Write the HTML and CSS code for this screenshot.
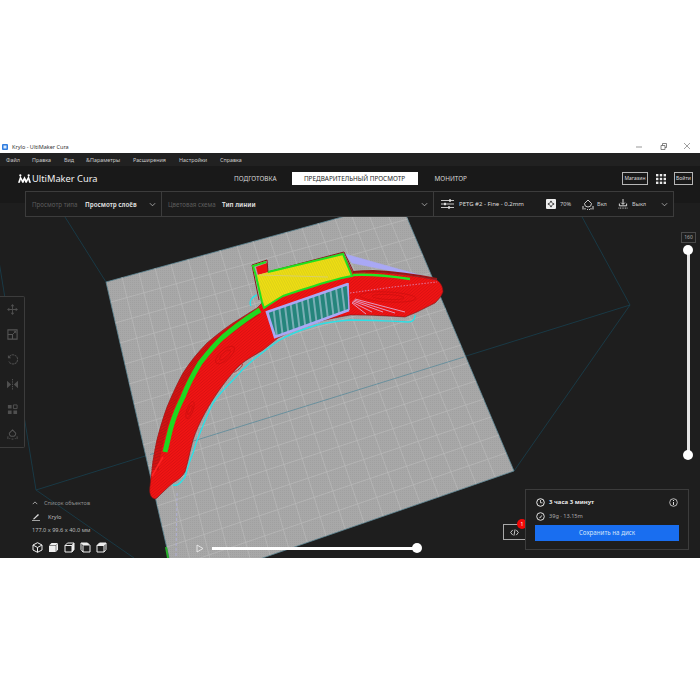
FILE: index.html
```html
<!DOCTYPE html>
<html>

<head>
    <meta charset="utf-8">
    <title>Krylo - UltiMaker Cura</title>
    <link rel="stylesheet" href="styles.css">
</head>

<body>
    <div class="window">
        <div class="title-bar">
            <svg class="app-icon" viewBox="0 0 6 6"><rect width="6" height="6" rx="1" fill="#2f7de0"/><rect x="1.500" y="1.500" width="3" height="3" fill="#d8e8fa"/></svg>
            <span class="title-text">Krylo - UltiMaker Cura</span>
            <div class="win-controls">
                <svg viewBox="0 0 9 9"><path d="M1 5h6" stroke="#999"/></svg>
                <svg viewBox="0 0 9 9"><path d="M2 3.500h4v4h-4zM3.500 3.500v-2h4v4h-1.500" fill="none" stroke="#666" stroke-width=".8"/></svg>
                <svg viewBox="0 0 9 9"><path d="M1 1l6 6M7 1l-6 6" stroke="#777" stroke-width=".7"/></svg>
            </div>
        </div>

        <div class="menu-bar">
            <span class="menu-item w-file">Файл</span>
            <span class="menu-item w-edit">Правка</span>
            <span class="menu-item w-view">Вид</span>
            <span class="menu-item w-params">&amp;Параметры</span>
            <span class="menu-item w-ext">Расширения</span>
            <span class="menu-item w-set">Настройки</span>
            <span class="menu-item">Справка</span>
        </div>

        <div class="header">
            <div class="header-row">
                <div class="logo">
                    <svg class="logo-mark" viewBox="0 0 14 9"><path d="M0 9L2.500 1.500 5 6 7 2 9 6 11.500 1.500 14 9H12L11 5.500 9.500 9H8L7 6.500 6 9H4.500L3 5.500 2 9Z" fill="#fff"/><circle cx="2.500" cy="1.200" r="1.200" fill="#fff"/><circle cx="11.500" cy="1.200" r="1.200" fill="#fff"/></svg>
                    <span>UltiMaker Cura</span>
                </div>
                <div class="tabs">
                    <span class="tab">ПОДГОТОВКА</span>
                    <span class="tab tab-active">ПРЕДВАРИТЕЛЬНЫЙ ПРОСМОТР</span>
                    <span class="tab">МОНИТОР</span>
                </div>
                <div class="header-actions">
                    <span class="outline-btn market-btn">Магазин</span>
                    <svg class="apps-icon" viewBox="0 0 10 10" fill="#e8e8e8"><rect width="2.400" height="2.400"/><rect x="3.800" width="2.400" height="2.400"/><rect x="7.600" width="2.400" height="2.400"/><rect y="3.800" width="2.400" height="2.400"/><rect x="3.800" y="3.800" width="2.400" height="2.400"/><rect x="7.600" y="3.800" width="2.400" height="2.400"/><rect y="7.600" width="2.400" height="2.400"/><rect x="3.800" y="7.600" width="2.400" height="2.400"/><rect x="7.600" y="7.600" width="2.400" height="2.400"/></svg>
                    <span class="outline-btn login-btn">Войти</span>
                </div>
            </div>

            <div class="view-panel">
                <div class="panel-cell cell-type">
                    <span class="dim-label">Просмотр типа</span>
                    <span class="strong-label">Просмотр слоёв</span>
                    <svg class="chevron" viewBox="0 0 8 5"><path d="M1 1l3 3 3-3" fill="none" stroke="#bbb" stroke-width=".9"/></svg>
                </div>
                <div class="panel-cell cell-scheme">
                    <span class="dim-label">Цветовая схема</span>
                    <span class="strong-label">Тип линии</span>
                    <svg class="chevron" viewBox="0 0 8 5"><path d="M1 1l3 3 3-3" fill="none" stroke="#bbb" stroke-width=".9"/></svg>
                </div>
                <div class="panel-cell cell-print">
                    <svg class="settings-icon" viewBox="0 0 13 10"><path d="M0 1.500h13M0 5h13M0 8.500h13" stroke="#ddd" stroke-width=".9"/><rect x="8" y=".3" width="2" height="2.400" fill="#ddd"/><rect x="3" y="3.800" width="2" height="2.400" fill="#ddd"/><rect x="7" y="7.300" width="2" height="2.400" fill="#ddd"/></svg>
                    <span class="print-name">PETG #2 - Fine - 0.2mm</span>
                    <svg class="print-icon infill-icon" viewBox="0 0 10 10"><rect width="10" height="10" rx="1" fill="#eee"/><path d="M5 1.500L6.500 3.500H3.500ZM5 8.500L3.500 6.500H6.500ZM1.500 5L3.500 3.500V6.500ZM8.500 5L6.500 6.500V3.500Z" fill="#222"/></svg>
                    <span class="print-val val-infill">70%</span>
                    <svg class="print-icon support-icon" viewBox="0 0 12 11"><path d="M6 1L9.500 4.500A3.500 3.500 0 0 1 2.500 4.500Z" fill="none" stroke="#ddd" stroke-width=".9"/><path d="M1 10.500V7M3 10.500V9M5 10.500h.9M7 10.500h.9M9 10.500V9M11 10.500V7" stroke="#ddd"/></svg>
                    <span class="print-val val-support">Вкл</span>
                    <svg class="print-icon adhesion-icon" viewBox="0 0 10 11"><path d="M5 0v5.500M3 4l2 2 2-2M1 5v2.500h8V5" fill="none" stroke="#eee"/><path d="M0 10h10" stroke="#ddd" stroke-dasharray="1 .8"/></svg>
                    <span class="print-val val-adhesion">Выкл</span>
                    <svg class="chevron" viewBox="0 0 8 5"><path d="M1 1l3 3 3-3" fill="none" stroke="#bbb" stroke-width=".9"/></svg>
                </div>
            </div>
        </div>

        <div class="viewport">
            <svg class="scene" viewBox="0 203 700 355">
                <defs>
                    <pattern id="plateDots" width="2" height="2" patternUnits="userSpaceOnUse">
                        <rect width="2" height="2" fill="#a8a8a8"/>
                        <rect width="1" height="1" fill="#a0a0a0"/>
                    </pattern>
                    <pattern id="redRings" width="2.200" height="2.200" patternUnits="userSpaceOnUse" patternTransform="rotate(-40 250 340)">
                        <rect width="2.200" height="2.200" fill="#f01414"/>
                        <rect width="2.200" height=".7" fill="#d81010"/>
                    </pattern>
                    <pattern id="yellowFill" width="1.600" height="1.600" patternUnits="userSpaceOnUse" patternTransform="rotate(-70)">
                        <rect width="1.600" height="1.600" fill="#efe012"/>
                        <rect width="1.600" height=".4" fill="#cfc21c"/>
                    </pattern>
                    <pattern id="infillBars" width="6" height="7" patternUnits="userSpaceOnUse" patternTransform="translate(267 312) rotate(-19) skewX(-12)">
                        <rect width="6" height="7" fill="#25857c"/>
                        <rect width="2" height="7" fill="#78aeb4"/>
                    </pattern>
                </defs>

                <!-- wireframe of the build volume -->
                <path class="wire" d="M36 490L-8 218M36 490L134 558M36 490L630 305M630 305L581 215M630 305L514 471M106 282L65 217"/>

                <!-- build plate -->
                <path class="plate" d="M106 282L400 201L514 471L176 588Z"/>
                <path class="plate-grid" d="M122 277L195 581M139 273L214 575M155 268L232 568M171 264L251 562M188 259L270 555M204 255L289 549M220 250L307 542M237 246L326 536M253 241L345 529M269 237L364 523M286 232L383 516M302 228L401 510M318 223L420 503M335 219L439 497M351 214L458 490M367 210L476 484M384 205L495 477
                M111 302L408 219M115 323L415 237M120 343L423 255M125 364L430 273M129 384L438 291M134 404L446 309M139 425L453 327M143 445L461 345M148 466L468 363M153 486L476 381M157 506L484 399M162 527L491 417M167 547L499 435M171 568L506 453"/>
                <path class="wire-plate" d="M150 454.500L464 357"/>

                <!-- skirt and travels -->
                <path class="skirt" d="M173 485C178 487 182 481 185 477C188 466 190 460 193 453C195 446 197 440 200 433C204 423 208 413 213 403C219 394 226 387 233 380C239 373 246 366 253 360C261 354 269 347 278 341C290 334 303 329 317 325C328 322 339 321 350 320C370 320 390 321 408 322C413 322 415 319 415 315"/>
                <path class="skirt" d="M257 295C251 297 249 302 251 306"/>
                <path class="travel" d="M345 254L437 280L352 263Z"/>
                <path class="travel-dash" d="M177 493L176 558"/>
                <path class="bottom-green" d="M166 547L168 558"/>

                <!-- printed part -->
                <path class="red-body" d="M155 499C150 498 149 492 150 486C151 478 151 475 152 470C153 460 155 450 157 440C160 428 163 418 167 407C172 395 177 384 183 373C190 362 198 352 207 343C215 336 224 329 233 323C241 318 249 313 257 308L262 303L268 272L343 253L353 273C362 272 368 272 373 272C395 273 417 276 437 280C441 283 443 287 443 292C441 297 438 300 435 303C429 306 423 309 417 312L405 317C390 316 372 315 350 315C339 317 328 319 317 322C303 326 290 331 278 338C273 342 268 346 263 350C255 355 247 359 240 365C234 371 229 377 223 385C216 394 210 404 205 413C200 422 196 431 193 440C190 451 188 462 185 472C182 477 178 480 173 483C168 487 162 493 157 498Z"/>
                <path class="red-edge" d="M155 470C156 460 158 450 160 441C163 430 166 420 170 409C175 397 180 386 186 375C193 364 201 354 210 346C218 339 227 332 236 326C243 321 251 316 258 312"/>
                <path class="red-edge-thin" d="M353 272C362 271 368 271 373 271C395 272 417 275 437 279"/>
                <path class="green-line green-wide" d="M165 452C168 440 170 430 172 424C175 414 180 403 183 397C188 384 194 373 200 363C207 354 214 345 223 337C235 327 247 318 260 310"/>
                <path class="green-line" d="M353 275C372 274 390 276 410 279"/>
                <path class="tip-seam" d="M152 476L163 457"/>
                <ellipse class="ring" cx="225" cy="355" rx="12" ry="5" transform="rotate(-42 225 355)"/>
                <ellipse class="ring" cx="225" cy="355" rx="7" ry="2.500" transform="rotate(-42 225 355)"/>
                <ellipse class="ring" cx="190" cy="410" rx="9" ry="3" transform="rotate(-70 190 410)"/>
                <ellipse class="ring" cx="190" cy="410" rx="5" ry="1.500" transform="rotate(-70 190 410)"/>
                <ellipse class="ring" cx="238" cy="368" rx="6" ry="1.500" transform="rotate(-42 238 368)"/>
                <ellipse class="ring" cx="388" cy="297" rx="28" ry="5" transform="rotate(3 388 297)"/>
                <ellipse class="ring" cx="388" cy="297" rx="16" ry="2.500" transform="rotate(3 388 297)"/>
                <path class="fan" d="M352 302L372 312M352 303L366 314M353 301L383 312M354 300L395 313M355 299L405 312"/>
                <path class="fan-dash" d="M350 293L393 287L437 282"/>

                <!-- top wall with infill -->
                <path class="tab-red" d="M256 267L267 263L268 272L258 275Z"/>
                <path class="yellow" d="M257 275L343 254L352 276C339 278 328 282 317 285C305 289 294 292 283 296C276 300 270 304 264 308L262 302Z"/>
                <path class="wall-outer" d="M259 300L252 265L267 260L268 272L344 252L354 273"/>
                <path class="wall" d="M268 272L343 254L352 276C339 278 328 282 317 285C305 289 294 292 283 296C276 300 270 304 264 308L262 302L256 276L253 266L266 262"/>
                <path class="seam" d="M259 275L328 277"/>
                <path class="infill" d="M267 312L348 283L349 310L275 337Z"/>
                <path class="infill-edge" d="M348 284L267 312L275 337L349 310"/>
                <path class="infill-side" d="M348 283L349 310"/>
            </svg>

            <div class="tool-bar">
                <svg class="tool" viewBox="0 0 12 12"><path d="M6 0L8 2.500H4ZM6 12L4 9.500H8ZM0 6L2.500 4V8ZM12 6L9.500 8V4ZM5.500 2h1v8h-1zM2 5.500h8v1h-8z"/></svg>
                <svg class="tool" viewBox="0 0 12 12"><path d="M1 1h10v10h-10zM1 6h5v5" fill="none" stroke="#555" stroke-width="1.200"/><path d="M6.500 5.500L9.500 2.500M7.500 2.500h2v2"  fill="none" stroke="#555"/></svg>
                <svg class="tool" viewBox="0 0 12 12"><path d="M2.500 3A5 5 0 1 1 2 8" fill="none" stroke="#4c4c4c" stroke-width="1.100" stroke-dasharray="2.500 .6"/><path d="M1 1L1 4.500H4.500Z"/></svg>
                <svg class="tool" viewBox="0 0 12 12"><path d="M0 2L4.500 6L0 10ZM12 2L7.500 6L12 10Z"/><path d="M6 0v12" stroke="#555" stroke-dasharray="1.500 1"/></svg>
                <svg class="tool" viewBox="0 0 12 12"><path d="M1 1h4v4h-4zM7 7h4v4h-4zM1 7h4v4h-4z"/><path d="M7 1h4v4h-4z" fill="none" stroke="#555"/></svg>
                <svg class="tool" viewBox="0 0 12 12"><path d="M6 1L9.500 4.500A3.500 3.500 0 0 1 2.500 4.500Z" fill="none" stroke="#555" stroke-width="1.100"/><path d="M1 11V8M3 11V10M9 11V10M11 11V8M5 11h2" stroke="#555"/></svg>
            </div>

            <div class="object-list">
                <div class="object-row">
                    <svg class="small-chevron" viewBox="0 0 8 5"><path d="M1 4l3-3 3 3" fill="none" stroke="#ccc"/></svg>
                    <span class="list-title">Список объектов</span>
                </div>
                <div class="object-row">
                    <svg class="pencil" viewBox="0 0 8 8"><path d="M1 6L6 1l1 1-5 4.500z" fill="#ddd"/><path d="M0 7.500h8" stroke="#ddd" stroke-width=".7"/></svg>
                    <span class="object-name">Krylo</span>
                </div>
                <div class="object-size">177.0 x 99.6 x 40.0 мм</div>
                <div class="view-icons">
                    <svg viewBox="0 0 11 11"><path d="M5.500 .7L10 3v5L5.500 10.300 1 8V3ZM1 3l4.500 2.500L10 3M5.500 5.500v4.800" fill="none" stroke="#eee"/></svg>
                    <svg viewBox="0 0 11 11"><path d="M1 3.500L3.500 1H10V7.500L8 10H1Z" fill="#eee"/><path d="M1 3.500H8V10M8 3.500L10 1" fill="none" stroke="#222" stroke-width=".5"/></svg>
                    <svg viewBox="0 0 11 11"><path d="M1 3.500L3.500 1H10V7.500L8 10H1ZM1 3.500H8V10M8 3.500L10 1" fill="none" stroke="#eee"/><path d="M8 3.500L10 1V7.500L8 10Z" fill="#eee"/></svg>
                    <svg viewBox="0 0 11 11"><path d="M1 1H7.500L10 3.500V10H3L1 7.500Z" fill="none" stroke="#eee"/><path d="M1 1H7.500L10 3.500H3Z" fill="#eee"/><path d="M3 3.500V10" stroke="#eee"/></svg>
                    <svg viewBox="0 0 11 11"><path d="M1 3.500L3.500 1H10V7.500L8 10H1ZM1 3.500H8V10M8 3.500L10 1" fill="none" stroke="#eee"/><path d="M1 3.500L3.500 1H10L8 3.500Z" fill="#eee"/></svg>
                </div>
            </div>

            <div class="time-slider">
                <svg class="play" viewBox="0 0 8 9"><path d="M1 1L7 4.500L1 8Z" fill="none" stroke="#e6e6e6"/></svg>
                <div class="time-track"><span class="knob time-knob"></span></div>
            </div>

            <div class="layer-slider">
                <span class="layer-value">160</span>
                <div class="layer-track">
                    <span class="knob layer-knob-top"></span>
                    <span class="knob layer-knob-bottom"></span>
                </div>
            </div>

            <div class="gcode-btn">
                <svg class="gcode-icon" viewBox="0 0 10 8"><path d="M3 1L.6 4 3 7M7 1L9.400 4 7 7M5.600 .5L4.400 7.500" fill="none" stroke="#ddd"/></svg>
                <span class="badge">1</span>
            </div>

            <div class="print-panel">
                <div class="print-row">
                    <svg class="print-row-icon" viewBox="0 0 9 9"><circle cx="4.500" cy="4.500" r="3.800" fill="none" stroke="#eee"/><path d="M4.500 2v2.800h2" fill="none" stroke="#eee" stroke-width=".8"/></svg>
                    <span class="print-time">3 часа 3 минут</span>
                    <svg class="info-icon" viewBox="0 0 9 9"><circle cx="4.500" cy="4.500" r="3.800" fill="none" stroke="#ddd" stroke-width=".8"/><path d="M4.500 4v3M4.500 2v1" stroke="#ddd"/></svg>
                </div>
                <div class="print-row">
                    <svg class="print-row-icon" viewBox="0 0 9 9"><circle cx="4.500" cy="4.500" r="3.800" fill="none" stroke="#ddd"/><path d="M2.500 6.500L6.500 2.500L5 5.500Z" fill="#ddd"/></svg>
                    <span class="print-usage">39g · 13.15m</span>
                </div>
                <div class="save-btn">Сохранить на диск</div>
            </div>
        </div>
    </div>
</body>

</html>
```
FILE: styles.css
```css
body {
    margin: 0;
    background: #fff;
    font-family: "Noto Sans", sans-serif;
}

.window {
    margin-top: 140px;
    width: 700px;
}

.title-bar {
    height: 13px;
    display: flex;
    align-items: center;
    padding-left: 2px;
    color: #333;
    font-size: 5.5px;
}

.app-icon {
    width: 6px;
    height: 6px;
    margin-right: 4px;
}

.win-controls {
    margin-left: auto;
    display: flex;
    gap: 15px;
    padding-right: 8px;
}

.win-controls svg {
    width: 9px;
    height: 9px;
}

.menu-bar {
    height: 13px;
    background: #212121;
    display: flex;
    align-items: center;
    padding-left: 6px;
    color: #c8c8c8;
    font-size: 5.4px;
}

.w-file { width: 26px; }
.w-edit { width: 32px; }
.w-view { width: 22px; }
.w-params { width: 47px; }
.w-ext { width: 46px; }
.w-set { width: 41px; }

.header {
    position: relative;
    height: 37px;
    background: #191919;
}

.header-row {
    height: 25px;
    display: flex;
    align-items: center;
    padding: 0 7px 0 18px;
}

.logo {
    width: 216px;
    display: flex;
    align-items: center;
    gap: 1px;
    color: #f2f2f2;
    font-size: 9.3px;
}

.logo-mark {
    width: 13px;
    height: 9px;
}

.tabs {
    display: flex;
    align-items: center;
    gap: 16px;
}

.tab {
    color: #d8d8d8;
    font-size: 6.4px;
}

.tab-active {
    width: 126px;
    height: 13px;
    margin: 0 1px 0 -1px;
    line-height: 13px;
    text-align: center;
    background: #fff;
    color: #222;
}

.header-actions {
    margin-left: auto;
    display: flex;
    align-items: center;
}

.outline-btn {
    height: 11px;
    line-height: 11px;
    border: 1px solid #b5b5b5;
    color: #ddd;
    font-size: 5px;
    text-align: center;
}

.market-btn { width: 24px; }
.login-btn { width: 17px; }

.apps-icon {
    width: 10px;
    height: 10px;
    margin: 0 8px;
}

.view-panel {
    position: absolute;
    z-index: 3;
    top: 25px;
    left: 25px;
    width: 647px;
    height: 24px;
    display: flex;
    background: #1c1c1c;
    border: 1px solid #3c3c3c;
}

.panel-cell {
    display: flex;
    align-items: center;
    border-right: 1px solid #3c3c3c;
    font-size: 6.2px;
}

.cell-type {
    width: 129px;
    padding-left: 6px;
}

.cell-scheme {
    width: 265px;
    padding-left: 6px;
}

.cell-print {
    flex: 1;
    padding-left: 7px;
    border-right: 0;
}

.dim-label {
    color: #5c5c5c;
    width: 53px;
}

.cell-scheme .dim-label {
    width: 54px;
}

.strong-label {
    color: #d8d8d8;
    font-weight: 700;
}

.chevron {
    width: 7px;
    height: 5px;
    margin-left: auto;
    margin-right: 5px;
}

.settings-icon {
    width: 13px;
    height: 10px;
    margin-right: 5px;
}

.print-name {
    width: 87px;
    color: #ddd;
    font-size: 6px;
}

.print-icon {
    width: 10px;
    height: 10px;
    margin-right: 4px;
}

.print-val {
    color: #ccc;
    font-size: 5.6px;
}

.val-infill { width: 22px; }
.val-support { width: 21px; }
.support-icon { width: 12px; height: 11px; margin-right: 3px; }

.viewport {
    position: relative;
    height: 355px;
    background: #1e1e1e;
    overflow: hidden;
}

.scene {
    display: block;
    width: 700px;
    height: 355px;
}

.wire {
    fill: none;
    stroke: #18404f;
    stroke-width: .8;
}

.plate {
    fill: url(#plateDots);
    stroke: #5d8794;
    stroke-width: .8;
}

.plate-grid {
    fill: none;
    stroke: #bababa;
    stroke-width: .7;
}

.wire-plate {
    fill: none;
    stroke: #5b8a9a;
    stroke-width: .8;
}

.skirt {
    fill: none;
    stroke: #2ce0e6;
    stroke-width: 1.400;
}

.travel {
    fill: #a9a8f5;
    stroke: #a9a8f5;
    stroke-width: .6;
}

.travel-dash {
    fill: none;
    stroke: #b3b3e0;
    stroke-width: .8;
    stroke-dasharray: 3 2;
}

.bottom-green {
    stroke: #28b028;
    stroke-width: 2;
}

.red-body {
    fill: url(#redRings);
    stroke: #7c1616;
    stroke-width: .6;
}

.red-edge {
    fill: none;
    stroke: #b81414;
    stroke-width: 7;
    stroke-dasharray: 1 .5;
}

.red-edge-thin {
    fill: none;
    stroke: #9a1616;
    stroke-width: 2;
}

.green-line {
    fill: none;
    stroke: #22e622;
    stroke-width: 2.500;
}

.green-wide {
    stroke: #1fd81f;
    stroke-width: 5;
}

.tip-seam {
    fill: none;
    stroke: #ff2424;
    stroke-width: 1.500;
}

.ring {
    fill: none;
    stroke: #cc0e0e;
    stroke-width: .7;
}

.fan {
    fill: none;
    stroke: #e2a6d0;
    stroke-width: .9;
}

.fan-dash {
    fill: none;
    stroke: #d9a0d8;
    stroke-width: .7;
    stroke-dasharray: 1.500 1.500;
}

.tab-red {
    fill: #ee1212;
}

.yellow {
    fill: url(#yellowFill);
}

.wall-outer {
    fill: none;
    stroke: #8a1a1a;
    stroke-width: 1;
}

.wall {
    fill: none;
    stroke: #1fe01f;
    stroke-width: 2;
}

.seam {
    fill: none;
    stroke: #cfc9a0;
    stroke-width: .6;
}

.infill {
    fill: url(#infillBars);
}

.infill-edge {
    fill: none;
    stroke: #a9a8f5;
    stroke-width: 2.600;
}

.infill-side {
    fill: none;
    stroke: #a9a8f5;
    stroke-width: 1.500;
}

/* overlays on the 3d view */
.tool-bar {
    position: absolute;
    top: 93px;
    left: 0;
    width: 24px;
    height: 150px;
    display: flex;
    flex-direction: column;
    justify-content: space-around;
    align-items: center;
    background: #1e1e1e;
    border: 1px solid #3c3c3c;
    border-left: 0;
    border-radius: 0 2px 2px 0;
}

.tool {
    width: 11px;
    height: 11px;
    fill: #4f4f4f;
}

.object-list {
    position: absolute;
    left: 32px;
    top: 293px;
    color: #bbb;
    font-size: 5.6px;
}

.object-row {
    height: 14px;
    display: flex;
    align-items: center;
}

.small-chevron {
    width: 6px;
    height: 4px;
    margin-right: 6px;
}

.list-title {
    color: #8c8c8c;
}

.pencil {
    width: 8px;
    height: 8px;
    margin-right: 8px;
}

.object-size {
    height: 12px;
    line-height: 12px;
}

.view-icons {
    display: flex;
    gap: 5px;
    margin-top: 5.500px;
    color: #fff;
}

.view-icons svg {
    width: 11px;
    height: 11px;
}

.time-slider {
    position: absolute;
    left: 196px;
    top: 341px;
    display: flex;
    align-items: center;
    gap: 8px;
}

.play {
    width: 8px;
    height: 9px;
}

.time-track {
    position: relative;
    width: 205px;
    height: 2.500px;
    background: #fff;
}

.knob {
    position: absolute;
    width: 10px;
    height: 10px;
    border-radius: 50%;
    background: #fff;
}

.time-knob {
    right: -5px;
    top: -4px;
}

.layer-slider {
    position: absolute;
    left: 681px;
    top: 29px;
    width: 15px;
    display: flex;
    flex-direction: column;
    align-items: center;
}

.layer-value {
    width: 13px;
    height: 9px;
    line-height: 9px;
    border: 1px solid #4a4a4a;
    color: #aaa;
    font-size: 5px;
    text-align: center;
}

.layer-track {
    position: relative;
    width: 2.500px;
    height: 205px;
    margin-top: 7px;
    background: #e6e6e6;
}

.layer-knob-top {
    top: -5px;
    left: -4px;
}

.layer-knob-bottom {
    bottom: -5px;
    left: -4px;
}

.gcode-btn {
    position: absolute;
    left: 503px;
    top: 321px;
    width: 22px;
    height: 16px;
    display: flex;
    align-items: center;
    justify-content: center;
    border: 1px solid #a8a8a8;
    border-right: 0;
    box-sizing: border-box;
}

.gcode-icon {
    width: 9px;
    height: 7px;
}

.badge {
    position: absolute;
    top: -6px;
    right: -2px;
    width: 10px;
    height: 10px;
    line-height: 10px;
    border-radius: 50%;
    background: #f00808;
    color: #fff;
    font-size: 5px;
    text-align: center;
}

.print-panel {
    position: absolute;
    left: 525px;
    top: 286px;
    width: 144px;
    height: 54px;
    padding: 5px 9px 0;
    background: #1e1e1e;
    border: 1px solid #3c3c3c;
}

.print-row {
    height: 14px;
    display: flex;
    align-items: center;
}

.print-row-icon {
    width: 9px;
    height: 9px;
    margin-right: 4px;
    margin-left: 1px;
}

.print-time {
    color: #e8e8e8;
    font-size: 6px;
    font-weight: 700;
}

.info-icon {
    width: 9px;
    height: 9px;
    margin-left: auto;
    margin-right: 1px;
}

.print-usage {
    color: #aaa;
    font-size: 5.6px;
}

.save-btn {
    height: 16px;
    line-height: 16px;
    margin-top: 2px;
    background: #196ef0;
    color: #d4e4fa;
    font-size: 6.2px;
    text-align: center;
}
```
